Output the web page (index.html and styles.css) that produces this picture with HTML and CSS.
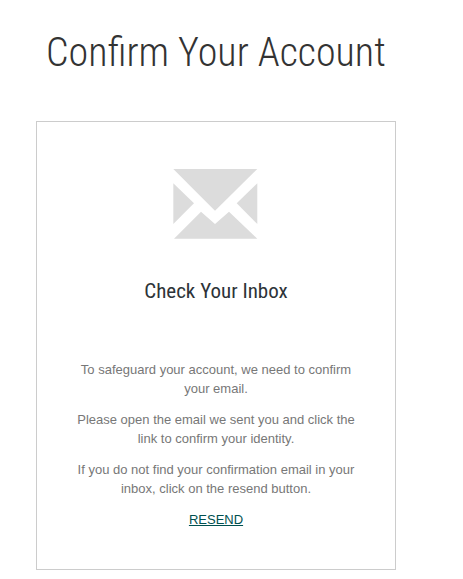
FILE: index.html
```html
<!DOCTYPE html>
<html>
	<head>
		<meta charset="UTF-8">
		<title>Confirm Your Account</title>
		<link rel="stylesheet" href="styles.css">
	</head>

	<body>
		<div class="page">
			<h1 class="page_title">Confirm Your Account</h1>
			<div class="confirm_box">
				<svg class="mail_icon" width="85" height="70" viewBox="0 0 85 70">
					<polygon points="0.3,0 84.3,0 42,41.7"/>
					<polygon points="0.3,14.3 21,34.3 0.3,55"/>
					<polygon points="84.3,14.3 63.7,34.3 84.3,55"/>
					<polygon points="1,69.7 28,42.7 42,55 56,42.7 84.3,69.7"/>
				</svg>
				<h2 class="box_title">Check Your Inbox</h2>
				<p>To safeguard your account, we need to confirm your email.</p>
				<p>Please open the email we sent you and click the link to confirm your identity.</p>
				<p>If you do not find your confirmation email in your inbox, click on the resend button.</p>
				<a class="resend" href="#">RESEND</a>
			</div>
		</div>
	</body>
</html>
```

FILE: styles.css
```css
* {
	margin: 0;
	padding: 0;
	box-sizing: border-box;
}

body {
	background-color: #fff;
	font-family: "Liberation Sans", Arial, sans-serif;
	font-size: 13px;
	line-height: 19px;
	color: #777;
}

.page {
	width: 396px;
	margin-left: 36px;
	padding-top: 30px;
}

.page_title {
	margin-left: 10px;
	font-family: Roboto, sans-serif;
	font-stretch: condensed;
	font-size: 40px;
	font-weight: 300;
	line-height: 45px;
	color: #333;
	white-space: nowrap;
}

.confirm_box {
	display: flex;
	flex-direction: column;
	align-items: center;
	width: 360px;
	height: 449px;
	margin-top: 46px;
	padding: 47px 39px 0;
	border: 1px solid #ccc;
	text-align: center;
}

.mail_icon {
	display: block;
	margin-right: 1px;
	fill: #dcdcdc;
}

.box_title {
	margin-top: 39px;
	margin-bottom: 56px;
	font-family: Roboto, sans-serif;
	font-stretch: condensed;
	font-size: 21px;
	font-weight: 400;
	line-height: 26px;
	color: #2d3338;
	white-space: nowrap;
}

.confirm_box p {
	margin-bottom: 12px;
}

.resend {
	color: #00504f;
	text-decoration: underline;
}
```
